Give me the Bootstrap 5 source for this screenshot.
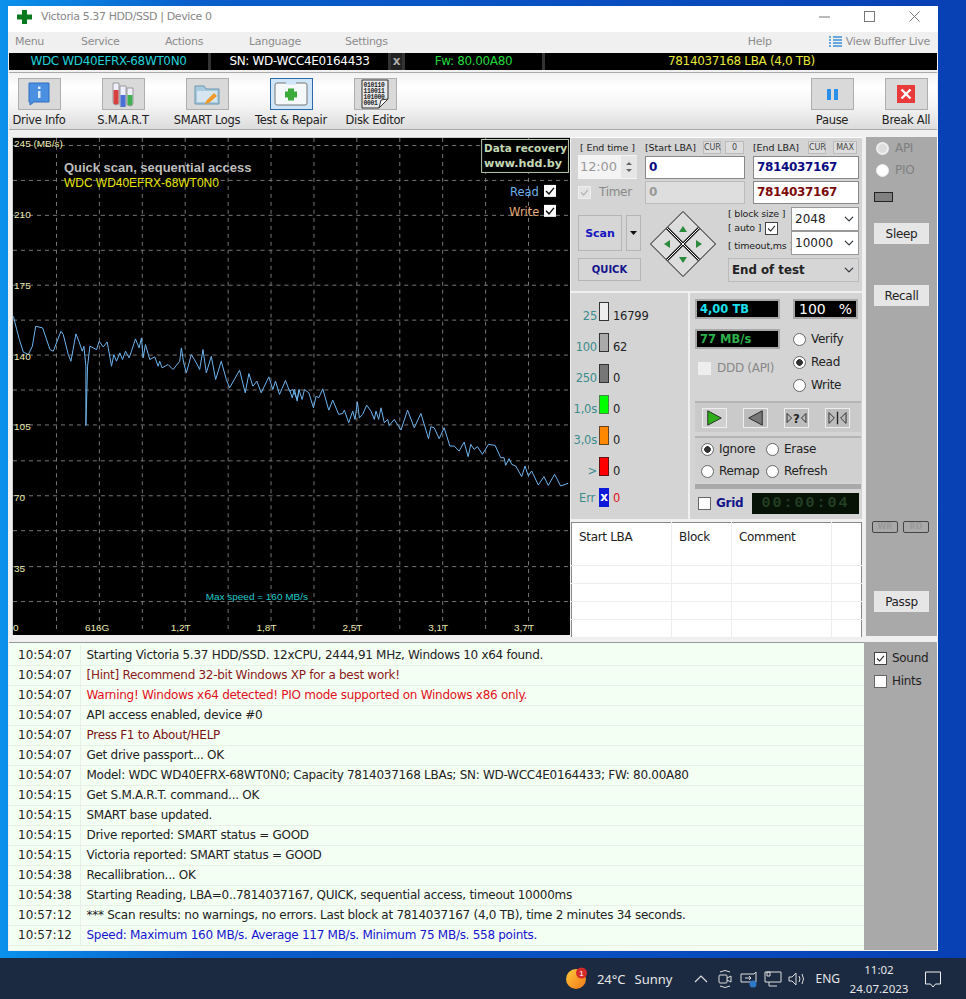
<!DOCTYPE html>
<html lang="en"><head><meta charset="utf-8"><title>Victoria</title>
<link href="https://cdn.jsdelivr.net/npm/bootstrap@5.3.0/dist/css/bootstrap.min.css" rel="stylesheet">
<style>
html,body{height:999px;overflow:hidden}
body{background:linear-gradient(90deg,#0a92ec 0,#0a5fca 20%,#0840b4 100%);font:11.5px/1.2 "DejaVu Sans",sans-serif;color:#222;position:relative}
.vw{margin:6px 0 0 8px;width:930px;height:945px;background:#f0f0f0}
.vtitle{height:26px;background:#fff;color:#888;font-size:11px;letter-spacing:-.4px;padding:0 0 5px 9px;gap:9px}
.vwin{margin-left:auto;gap:34px;padding-right:18px}
.vmenu{height:21px;color:#8c8c8c;padding:0 8px 2px 7px;font-size:11px;letter-spacing:-.3px}
.vmenu span.mi{width:84px}
.vhelp{margin-right:57px}
.vinfo{height:17px;background:#000;margin:0 1px;color:#fff;font-size:12px;letter-spacing:-.35px;text-align:center}
.vinfo>div{border-right:3px solid #333;height:100%;line-height:17px;white-space:nowrap}
.vtool{height:58px;margin:2px 1px 0;padding:5px 9px 0 0;background:linear-gradient(#f2f2f2,#fff 25%,#f4f4f4 60%,#dcdcdc);border-top:1px solid #aaa;border-bottom:1px solid #aaa;gap:24px}
.vti{width:60px;color:#222;font-size:11.5px;letter-spacing:-.3px;white-space:nowrap}
.vib{width:43px;height:32px;background:#d9d9d9;border:1px solid #aeaeae;margin-bottom:4px}
.vib.on{background:#cfe5f8;border-color:#2a6aa8}
.vmain{margin-top:7px;height:499px;padding-left:4px}
.vchart{width:558px;height:498px;background:#000;border-left:1px solid #ccc;border-top:1px solid #ccc;display:block;flex:none}
.vctl{width:291px;margin-left:1px;background:#f0f0f0;height:499px;flex:none}
.vtop{height:154px;flex:none;background:#d4d4d4;padding:3px 3px 0 7px;font-size:9.5px;letter-spacing:-.1px;border-top:1px solid #fff;white-space:nowrap}
.vlbls{display:grid;grid-template-columns:67px 108px 1fr;height:13px;align-items:center}
.vk{background:#ddd;border:1px solid #bbb;font-size:8px;line-height:11px;padding:0;color:#444;text-align:center;display:block}
.vf{height:23px;border:1px solid #888;background:#fff;font:bold 12px/21px "DejaVu Sans",sans-serif;padding:0 3px;border-radius:0;color:#0a0a80;letter-spacing:-.35px}
.vf.dis{background:#dedede;color:#999;border-color:#bbb}
.vf.red{color:#7d0a0a}
.vspin{width:59px;height:24px;background:#f4f4f4;color:#999;font-size:13px;padding-left:2px}
.vbtn{background:#d6d6d6;border:1px solid #b5b5b5;border-radius:0;padding:0;font:bold 11px "DejaVu Sans",sans-serif;color:#1414c0}
.vsel{height:24px;border:1px solid #999;border-radius:0;background-color:#fff;font:12px/22px "DejaVu Sans",sans-serif;padding:0 0 0 3px;background-position:right 3px center;background-size:12px 10px;color:#222}
.vlow{height:226px;margin-top:2px;flex:none}
.vstats{width:119px;background:#d4d4d4;padding-top:9px;gap:12px;border-right:2px solid #f0f0f0;flex:none}
.vrow{height:19px;font-size:11.5px;letter-spacing:-.2px}
.vrow b{font-weight:400;width:26px;text-align:right;color:#3c8c8c;margin-right:2px;white-space:nowrap;flex:none;padding-top:10px}
.vrow span{padding-top:10px}
.vrow b.verr{padding:3px 2px 0 0}
.vrow span.verr{padding-top:3px;color:#e01020}
.vrow i{display:block;width:10px;height:19px;border:1px solid #333;margin-right:4px;flex:none}
.vright{width:172px;background:#d4d4d4;padding:6px 1px 0 5px;flex:none}
.vblk{background:#000;border:2px solid #a8a8a8;font:bold 11.5px/16px "DejaVu Sans",sans-serif;padding-left:3px;height:20px}
.vcoll{width:98px;flex:none}
.form-check-input.vr,.form-check-input.vc{width:13px;height:13px;margin:0;flex:none;border:1px solid #666;background-color:#fff;opacity:1}
.form-check-input.vr:checked{background:#fff radial-gradient(circle,#333 3px,#fff 3.6px);border-color:#666}
.form-check-input.vc{border-radius:0}
.form-check-input.vc:checked{background-color:#fff;border-color:#444;background-image:url("data:image/svg+xml,%3csvg xmlns='http://www.w3.org/2000/svg' viewBox='0 0 13 13'%3e%3cpath fill='none' stroke='%23222' stroke-width='1.3' d='M2.5 6.5l3 3 5-6'/%3e%3c/svg%3e");background-size:100%}
.form-check-input.vc:disabled{border-color:#eee;background-color:#eee}
.form-check-input.vc:disabled:checked{background-color:#e4e4e4;border-color:#eee;background-image:url("data:image/svg+xml,%3csvg xmlns='http://www.w3.org/2000/svg' viewBox='0 0 13 13'%3e%3cpath fill='none' stroke='%23aaa' stroke-width='1.3' d='M2.5 6.5l3 3 5-6'/%3e%3c/svg%3e")}
.vopt{gap:5px;font-size:12px;letter-spacing:-.3px;height:13px;white-space:nowrap}
.vbar{height:31px;background:#cacaca;border-top:2px solid #b4b4b4;margin-top:9px;padding-left:7px;gap:16px;width:166px}
.vpb{width:25px;height:20px;background:#bdbdbd;border:1px solid #eee;display:block}
.vgrp{height:46px;background:#d0d0d0;border-top:2px solid #b4b4b4;margin-top:4px;width:166px;padding:5px 0 0 6px;gap:9px}
.vsep{height:5px;background:#a9a9a9;width:166px;margin-top:2px}
.vled{width:107px;height:21px;background:#061206;color:#243f24;font:bold 15px/21px "Liberation Mono",monospace;letter-spacing:2px;text-align:center}
.vtbl{width:291px;height:114px;margin-top:3px;background:#fff;border:1px solid #888;font-size:12px;letter-spacing:-.33px;table-layout:fixed;border-collapse:collapse;flex:none}
.vtbl td{border:1px solid #eee;padding:0;height:18px;vertical-align:top}
.vtbl tr:first-child td{height:43px;padding:7px 0 0 7px;border-top:0}
.vtbl td:first-child{border-left:0}.vtbl td:last-child{border-right:0}
.vside{width:72px;margin-left:4px;background:#a9a9a9;border-right:1px solid #fff;height:499px;padding:4px 8px 0;flex:none;color:#808080;font-size:12px}
.vsopt{margin-left:2px;gap:6px}
.vgb{display:block;width:55px;height:21px;background:#e6e6e6;border:0;border-radius:0;padding:0;color:#222;font:12px "DejaVu Sans",sans-serif;letter-spacing:-.3px}
.vtag{width:27px;height:12px;border:1px solid #444;border-radius:2px;font:bold 8px/10px "DejaVu Sans",sans-serif;color:#999;text-align:center}
.vlogw{height:308px;margin-top:6px;padding-left:1px}
.vlog{width:855px;height:308px;background:#f4fff4;border-top:1px solid #999;font-size:12px;letter-spacing:-.28px;border-collapse:collapse;align-self:flex-start;display:block;padding-top:2px}
.vlog td{height:20px;padding:0;border-bottom:1px solid #e6f0e6;white-space:nowrap}
.vlog td:first-child{width:71px;padding-left:9px;border-right:1px solid #e6f0e6;letter-spacing:0}
.vlog td:last-child{padding-left:6px;width:784px}
.vside2{width:74px;background:#a9a9a9;border-right:1px solid #fff;padding:10px 0 0 10px;gap:10px;color:#222;height:308px}
.vtask{position:absolute;left:0;right:0;top:958px;height:41px;background:#1b2a41;color:#e6e6e6;font:13px "Noto Sans",sans-serif;padding-right:25px}
.c1{color:#8b1a1a}.c2{color:#e01020}.c3{color:#7a1515}.c4{color:#1414d0}
</style></head><body>
<div class="vw d-flex flex-column">
 <div class="vtitle d-flex align-items-center">
  <svg width="15" height="14" viewBox="0 0 15 14"><path fill="#0a7a1e" d="M5 0h5v4.500h5v5h-5V14H5V9.500H0v-5h5z"/></svg>
  <span>Victoria 5.37 HDD/SSD | Device 0</span>
  <div class="vwin d-flex align-items-center">
   <svg width="11" height="11" viewBox="0 0 11 11"><path stroke="#777" d="M0 6h11"/></svg>
   <svg width="11" height="11" viewBox="0 0 11 11"><rect x=".5" y=".5" width="10" height="10" fill="none" stroke="#777"/></svg>
   <svg width="11" height="11" viewBox="0 0 11 11"><path stroke="#777" d="M.5.500l10 10M10.500.500l-10 10"/></svg>
  </div>
 </div>
 <div class="vmenu d-flex align-items-center">
  <span class="mi" style="width:66px">Menu</span><span class="mi">Service</span><span class="mi">Actions</span><span class="mi" style="width:96px">Language</span><span class="mi me-auto">Settings</span>
  <span class="vhelp">Help</span>
  <svg class="me-1" width="13" height="13" viewBox="0 0 13 13"><path stroke="#3a8fd8" stroke-width="1.4" d="M0 2h2M4 2h9M0 5h2M4 5h9M0 8h2M4 8h9M0 11h2M4 11h9"/></svg>
  <span>View Buffer Live</span>
 </div>
 <div class="vinfo d-flex">
  <div style="width:202px;color:#22d0d8">WDC WD40EFRX-68WT0N0</div>
  <div style="width:180px">SN: WD-WCC4E0164433</div>
  <div style="width:14px;font-weight:700;color:#aaa;background:#222">x</div>
  <div style="width:140px;color:#22d83a">Fw: 80.00A80</div>
  <div class="flex-grow-1" style="border:0;color:#e6e63a;padding-left:1px">7814037168 LBA (4,0 TB)</div>
 </div>
 <div class="vtool d-flex">
  <div class="vti d-flex flex-column align-items-center"><div class="vib d-flex align-items-center justify-content-center">
   <svg width="24" height="26" viewBox="0 0 24 26"><path fill="#4a8fe0" stroke="#2f6fc0" d="M2 2h20v19H7l-4 3v-3H2z"/><path fill="#dce9f8" d="M11 5.500h2.500v2.500H11zM11 10h2.500v7H11z"/></svg></div><span>Drive Info</span></div>
  <div class="vti d-flex flex-column align-items-center"><div class="vib d-flex align-items-center justify-content-center">
   <svg width="26" height="26" viewBox="0 0 26 26"><path fill="#eef" stroke="#999" d="M3 2h6v19a3 3 0 0 1-6 0zM10 5h6v19a3 3 0 0 1-6 0zM17 7h6v15a3 3 0 0 1-6 0z"/><path fill="#d84040" d="M3.500 9h5v12a2.500 2.500 0 0 1-5 0z"/><path fill="#4a70d8" d="M10.500 14h5v10a2.500 2.500 0 0 1-5 0z"/><path fill="#40b050" d="M17.500 14h5v8a2.500 2.500 0 0 1-5 0z"/></svg></div><span>S.M.A.R.T</span></div>
  <div class="vti d-flex flex-column align-items-center"><div class="vib d-flex align-items-center justify-content-center">
   <svg width="26" height="24" viewBox="0 0 26 24"><path fill="#a8cbe0" stroke="#6d95b0" d="M1 4h9l2 3h13v15H1z"/><path fill="#d5e6f0" d="M3 9h20v11H3z"/><path fill="#f09a2a" d="M12 19l8-8 3 3-8 7-4 1z"/></svg></div><span>SMART Logs</span></div>
  <div class="vti d-flex flex-column align-items-center"><div class="vib on d-flex align-items-center justify-content-center">
   <svg width="34" height="26" viewBox="0 0 34 26"><rect x="1" y="2" width="32" height="22" rx="2" fill="#f4f8f8" stroke="#777"/><path stroke="#cfe5f8" stroke-width="3" d="M12 2h10"/><path fill="#3aaa3a" d="M14 7.500h6v3h3v6h-3v3h-6v-3h-3v-6h3z"/></svg></div><span>Test &amp; Repair</span></div>
  <div class="vti d-flex flex-column align-items-center"><div class="vib d-flex align-items-center justify-content-center">
   <svg width="30" height="30" viewBox="0 0 30 30"><path fill="#e8e8e8" stroke="#333" d="M2 1h26v19l-9 9H2z"/><path fill="#fff" stroke="#333" d="M19 29l2-8 7-1z"/><text x="3.500" y="7.500" font-family="Liberation Mono" font-size="6.300" font-weight="700" fill="#222">010110</text><text x="3.500" y="13.500" font-family="Liberation Mono" font-size="6.300" font-weight="700" fill="#222">110011</text><text x="3.500" y="19.500" font-family="Liberation Mono" font-size="6.300" font-weight="700" fill="#222">101000</text><text x="3.500" y="25.500" font-family="Liberation Mono" font-size="6.300" font-weight="700" fill="#222">0001</text></svg></div><span>Disk Editor</span></div>
  <div class="vti d-flex flex-column align-items-center ms-auto"><div class="vib d-flex align-items-center justify-content-center">
   <svg width="11" height="11" viewBox="0 0 11 11"><path fill="#2a8fe8" d="M0 0h4v11H0zM7 0h4v11H7z"/></svg></div><span>Pause</span></div>
  <div class="vti d-flex flex-column align-items-center" style="margin-right:-8px;margin-left:-10px"><div class="vib d-flex align-items-center justify-content-center">
   <svg width="18" height="18" viewBox="0 0 18 18"><rect width="18" height="18" fill="#e83a3a"/><path stroke="#fff" stroke-width="2.400" d="M4.500 4.500l9 9M13.500 4.500l-9 9"/></svg></div><span>Break All</span></div>
 </div>
 <div class="vmain d-flex">
  <svg class="vchart" viewBox="13 138 558 498" width="558" height="498">
   <g stroke="#777" stroke-dasharray="4 4" fill="none">
    <path d="M56.500 138V634M99.500 138V634M142.500 138V634M185.500 138V634M228.500 138V634M271.500 138V634M314.500 138V634M357.500 138V634M400.500 138V634M443.500 138V634M486.500 138V634M529.500 138V634"/>
    <path d="M13 145.500H570M13 180.500H570M13 215.500H570M13 250.500H570M13 285.500H570M13 320.500H570M13 355.500H570M13 390.500H570M13 425.500H570M13 461.500H570M13 496.500H570M13 531.500H570M13 567.500H570M13 602.500H570"/>
   </g>
   <g fill="none" stroke="#6db4ee" stroke-width="1">
    <polyline vector-effect="non-scaling-stroke" transform="translate(0 300) scale(.3333)" points="40,50 50,90 58,120 70,158 85,165 97,140 107,80 128,85 150,150 160,155 183,95 190,105 205,165 213,185 228,103 237,125 247,155 252,140 258,200 258,378 263,200 270,140 290,150 298,125 310,142 322,127 335,200 342,165 350,185 360,160 368,180 377,155 388,175 395,155 407,118 418,145 425,115 430,175 437,135 450,180 465,172 475,200 480,185 487,205 505,195 520,210 540,185 545,145 552,190 560,220 575,165 590,190 600,210 610,150 620,220 635,170 648,240 665,185 680,240 690,265 720,212 737,280 748,222 760,260 772,245 785,280 808,232 820,270 828,245 840,285 858,243 870,275 880,270 893,300 900,270"/>
    <polyline vector-effect="non-scaling-stroke" transform="translate(290 340) scale(.3333)" points="0,150 8,175 15,150 23,185 28,150 38,180 45,150 58,160 72,205 80,170 88,175 100,148 118,212 130,182 148,225 160,222 165,212 178,250 190,215 197,240 204,187 210,235 220,225 232,197 245,215 255,240 260,215 268,240 275,205 285,250 295,240 300,258 315,240 335,272 355,212 375,265 395,222 418,298 425,262 435,265 450,298 465,265 482,320 495,320 510,335 525,308 537,352 545,315 555,330 565,322 580,345 598,315 618,318 635,355 645,355 650,378 660,358 668,375 680,380 698,412 708,380 718,410 728,395 748,437 765,412 778,438 797,405 815,440 838,432"/>
   </g>
   <g font-family="Liberation Sans" font-size="10" fill="#e8e8b0">
    <text x="14" y="147">245 (MB/s)</text><text x="14" y="218">210</text><text x="14" y="289">175</text><text x="14" y="360">140</text><text x="14" y="431">105</text><text x="14" y="502">70</text><text x="14" y="573">35</text>
    <text x="13" y="632">0</text><text x="85" y="632">616G</text><text x="171" y="632">1,2T</text><text x="257" y="632">1,8T</text><text x="343" y="632">2,5T</text><text x="429" y="632">3,1T</text><text x="515" y="632">3,7T</text>
   </g>
   <text x="206" y="601" font-family="Liberation Sans" font-size="10" fill="#20c8c8">Max speed = 160 MB/s</text>
   <text x="64" y="172" font-family="Liberation Sans" font-size="13" font-weight="700" fill="#bdbdbd">Quick scan, sequential access</text>
   <text x="64" y="187" font-family="Liberation Sans" font-size="12" fill="#e6e600">WDC WD40EFRX-68WT0N0</text>
   <rect x="482.500" y="139.500" width="87" height="33" fill="#000" stroke="#b8c8a8"/>
   <text x="485" y="152" font-family="DejaVu Sans" font-size="10.500" font-weight="700" fill="#c4d8b4">Data recovery</text>
   <text x="485" y="167" font-family="DejaVu Sans" font-size="11.200" font-weight="700" fill="#c4d8b4">www.hdd.by</text>
   <text x="511" y="196" font-family="DejaVu Sans" font-size="11.500" fill="#6fb0e8">Read</text>
   <text x="510" y="216" font-family="DejaVu Sans" font-size="11.500" fill="#e0a878">Write</text>
   <rect x="545" y="185" width="12" height="12" fill="#fff"/><path d="M547 191l3 3 5-6" fill="none" stroke="#111" stroke-width="1.400"/>
   <rect x="545" y="205" width="12" height="12" fill="#fff"/><path d="M547 211l3 3 5-6" fill="none" stroke="#111" stroke-width="1.400"/>
  </svg>
  <div class="vctl d-flex flex-column">
   <div class="vtop">
    <div class="vlbls"><span style="padding-left:2px">[ End time ]</span>
     <div class="d-flex align-items-center"><span style="width:58px">[Start LBA]</span><span class="vk" style="width:18px">CUR</span><span class="vk" style="width:19px;margin-left:4px">0</span></div>
     <div class="d-flex align-items-center"><span style="width:55px">[End LBA]</span><span class="vk" style="width:18px">CUR</span><span class="vk" style="width:24px;margin-left:7px">MAX</span></div></div>
    <div class="vlbls" style="height:24px;margin-top:1px">
     <div class="vspin d-flex align-items-center justify-content-between">12:00<svg width="16" height="22" viewBox="0 0 16 22"><rect width="16" height="22" fill="#e6e6e6"/><path fill="#666" d="M8 6l3 3H5zM8 16l3-3H5z"/></svg></div>
     <div class="vf" style="width:100px">0</div><div class="vf" style="width:106px">7814037167</div></div>
    <div class="vlbls" style="height:23px;margin-top:2px">
     <div class="d-flex align-items-center gap-2" style="color:#888;font-size:12px;letter-spacing:-.3px"><input class="form-check-input vc" type="checkbox" checked disabled aria-label="Timer"><span>Timer</span></div>
     <div class="vf dis" style="width:100px">0</div><div class="vf red" style="width:106px">7814037167</div></div>
    <div class="d-flex" style="margin-top:3px">
     <div style="width:63px;padding-top:8px">
      <div class="d-flex gap-1"><button class="btn vbtn" style="width:44px;height:36px">Scan</button><button class="btn vbtn d-flex align-items-center justify-content-center" style="width:15px;height:36px" aria-label="more"><svg width="7" height="4" viewBox="0 0 7 4"><path fill="#111" d="M0 0h7L3.500 4z"/></svg></button></div>
      <button class="btn vbtn d-block" style="width:63px;height:23px;margin-top:7px;color:#14148c;font-size:10px">QUICK</button>
     </div>
     <svg style="margin:4px 12px 0 9px;flex:none" width="66" height="66" viewBox="0 0 66 66">
      <path d="M33 .5L65.500 33 33 65.500.5 33z" fill="#ddd" stroke="#111"/>
      <path d="M17 17L49 49M49 17L17 49" stroke="#111" stroke-width="3"/><path d="M17 17L49 49M49 17L17 49" stroke="#fff" stroke-width="1"/>
      <path fill="#2c8a3c" d="M33 15l4 6h-8zM33 52l-4-6h8zM14 33l6-4v8zM52 33l-6-4v8z"/>
     </svg>
     <div class="flex-grow-1">
      <div class="d-flex" style="height:48px">
       <div style="width:63px;line-height:14px;white-space:nowrap;letter-spacing:-.2px"><div>[ block size ]</div><div class="d-flex align-items-center gap-1"><span>[ auto ]</span><input class="form-check-input vc" type="checkbox" checked aria-label="auto"></div><div class="mt-1">[ timeout,ms ]</div></div>
       <div class="d-flex flex-column" style="width:68px"><select class="form-select vsel" aria-label="block"><option>2048</option></select><select class="form-select vsel" aria-label="timeout"><option>10000</option></select></div>
      </div>
      <select class="form-select vsel d-block" style="margin-top:3px;background-color:#d6d6d6;font-weight:700;font-size:11.800px;border-color:#bbb" aria-label="end"><option>End of test</option></select>
     </div>
    </div>
   </div>
   <div class="vlow d-flex">
    <div class="vstats d-flex flex-column">
     <div class="vrow d-flex align-items-center"><b>25</b><i style="background:#eee"></i><span>16799</span></div>
     <div class="vrow d-flex align-items-center"><b>100</b><i style="background:#aaa"></i><span>62</span></div>
     <div class="vrow d-flex align-items-center"><b>250</b><i style="background:#777"></i><span>0</span></div>
     <div class="vrow d-flex align-items-center"><b>1,0s</b><i style="background:#0f0;border-color:#484"></i><span>0</span></div>
     <div class="vrow d-flex align-items-center"><b>3,0s</b><i style="background:#f80;border-color:#642"></i><span>0</span></div>
     <div class="vrow d-flex align-items-center"><b>&gt;</b><i style="background:#f00;border-color:#611"></i><span>0</span></div>
     <div class="vrow d-flex align-items-center"><b class="verr">Err</b><i class="d-flex align-items-center justify-content-center fst-normal fw-bold text-white" style="background:#0a1ad8;border:0;font-size:12px">x</i><span class="verr">0</span></div>
    </div>
    <div class="vright">
     <div class="d-flex">
      <div class="vcoll">
       <div class="vblk" style="width:85px;color:#1ee0f0">4,00 TB</div>
       <div class="vblk" style="width:85px;color:#2db04a;margin-top:10px">77 MB/s</div>
       <div class="d-flex align-items-center" style="gap:6px;margin-top:12px;padding-left:3px;color:#888;font-size:12px;letter-spacing:-.3px"><input class="form-check-input vc" type="checkbox" disabled aria-label="DDD"><span>DDD (API)</span></div>
      </div>
      <div>
       <div class="vblk d-flex justify-content-between" style="width:65px;color:#fff;font-weight:400;font-size:14px;padding:0 4px"><span>100</span><span>%</span></div>
       <div class="vopt d-flex align-items-center" style="margin-top:14px"><input class="form-check-input vr" type="radio" name="m" aria-label="Verify"><span>Verify</span></div>
       <div class="vopt d-flex align-items-center" style="margin-top:10px"><input class="form-check-input vr" type="radio" name="m" checked aria-label="Read"><span>Read</span></div>
       <div class="vopt d-flex align-items-center" style="margin-top:10px"><input class="form-check-input vr" type="radio" name="m" aria-label="Write"><span>Write</span></div>
      </div>
     </div>
     <div class="vbar d-flex align-items-center">
      <svg class="vpb" style="background:#d0d0d0" viewBox="0 0 25 20"><path d="M5 2l15 8-15 8z" fill="#2fb01a" stroke="#222"/></svg>
      <svg class="vpb" viewBox="0 0 25 20"><path d="M20 2L5 10l15 8z" fill="#777" stroke="#222"/></svg>
      <svg class="vpb" viewBox="0 0 25 20"><path d="M2 5l5 5-5 5zM23 5l-5 5 5 5z" fill="#bbb" stroke="#222"/><text x="12.500" y="15" text-anchor="middle" font-family="DejaVu Sans" font-size="13" font-weight="700" fill="#222">?</text></svg>
      <svg class="vpb" viewBox="0 0 25 20"><path d="M3 4l6 6-6 6zM22 4l-6 6 6 6z" fill="#bbb" stroke="#222"/><path d="M12.500 3v14" stroke="#222" stroke-width="1.500"/></svg>
     </div>
     <div class="vgrp d-flex flex-column">
      <div class="d-flex"><div class="vopt d-flex align-items-center" style="width:65px"><input class="form-check-input vr" type="radio" name="e" checked aria-label="Ignore"><span>Ignore</span></div><div class="vopt d-flex align-items-center"><input class="form-check-input vr" type="radio" name="e" aria-label="Erase"><span>Erase</span></div></div>
      <div class="d-flex"><div class="vopt d-flex align-items-center" style="width:65px"><input class="form-check-input vr" type="radio" name="e" aria-label="Remap"><span>Remap</span></div><div class="vopt d-flex align-items-center"><input class="form-check-input vr" type="radio" name="e" aria-label="Refresh"><span>Refresh</span></div></div>
     </div>
     <div class="vsep"></div>
     <div class="d-flex align-items-center" style="margin-top:4px;padding-left:3px">
      <input class="form-check-input vc" type="checkbox" aria-label="Grid"><span class="fw-bold" style="color:#14148c;font-size:12px;letter-spacing:-.3px;margin-left:5px;width:36px">Grid</span><div class="vled">00:00:04</div>
     </div>
    </div>
   </div>
   <table class="vtbl"><colgroup><col style="width:100px"><col style="width:60px"><col style="width:100px"><col></colgroup>
    <tr><td>Start LBA</td><td>Block</td><td>Comment</td><td></td></tr>
    <tr><td></td><td></td><td></td><td></td></tr><tr><td></td><td></td><td></td><td></td></tr><tr><td></td><td></td><td></td><td></td></tr><tr><td></td><td></td><td></td><td></td></tr>
   </table>
  </div>
  <div class="vside d-flex flex-column">
   <div class="vopt vsopt d-flex align-items-center" style="margin-top:1px"><input class="form-check-input vr" style="background:#ddd;border:2px solid #eee" type="radio" disabled aria-label="API"><span>API</span></div>
   <div class="vopt vsopt d-flex align-items-center" style="margin-top:9px"><input class="form-check-input vr" style="border-color:#eee" type="radio" disabled aria-label="PIO"><span>PIO</span></div>
   <div style="width:19px;height:10px;background:#808080;border:1px solid #222;margin-top:15px"></div>
   <button class="btn vgb" style="margin-top:21px">Sleep</button>
   <button class="btn vgb" style="margin-top:41px">Recall</button>
   <div class="d-flex" style="gap:5px;margin:215px 0 0 -2px"><div class="vtag">WR</div><div class="vtag">RD</div></div>
   <button class="btn vgb" style="margin-top:58px">Passp</button>
  </div>
 </div>
 <div class="vlogw d-flex">
  <table class="vlog">
   <tr><td>10:54:07</td><td>Starting Victoria 5.37 HDD/SSD. 12xCPU, 2444,91 MHz, Windows 10 x64 found.</td></tr>
   <tr><td>10:54:07</td><td class="c1">[Hint] Recommend 32-bit Windows XP for a best work!</td></tr>
   <tr><td>10:54:07</td><td class="c2">Warning! Windows x64 detected! PIO mode supported on Windows x86 only.</td></tr>
   <tr><td>10:54:07</td><td>API access enabled, device #0</td></tr>
   <tr><td>10:54:07</td><td class="c3">Press F1 to About/HELP</td></tr>
   <tr><td>10:54:07</td><td>Get drive passport... OK</td></tr>
   <tr><td>10:54:07</td><td>Model: WDC WD40EFRX-68WT0N0; Capacity 7814037168 LBAs; SN: WD-WCC4E0164433; FW: 80.00A80</td></tr>
   <tr><td>10:54:15</td><td>Get S.M.A.R.T. command... OK</td></tr>
   <tr><td>10:54:15</td><td>SMART base updated.</td></tr>
   <tr><td>10:54:15</td><td>Drive reported: SMART status = GOOD</td></tr>
   <tr><td>10:54:15</td><td>Victoria reported: SMART status = GOOD</td></tr>
   <tr><td>10:54:38</td><td>Recallibration... OK</td></tr>
   <tr><td>10:54:38</td><td>Starting Reading, LBA=0..7814037167, QUICK, sequential access, timeout 10000ms</td></tr>
   <tr><td>10:57:12</td><td>*** Scan results: no warnings, no errors. Last block at 7814037167 (4,0 TB), time 2 minutes 34 seconds.</td></tr>
   <tr><td>10:57:12</td><td class="c4">Speed: Maximum 160 MB/s. Average 117 MB/s. Minimum 75 MB/s. 558 points.</td></tr>
  </table>
  <div class="vside2 d-flex flex-column">
   <div class="vopt d-flex align-items-center"><input class="form-check-input vc" type="checkbox" checked aria-label="Sound"><span>Sound</span></div>
   <div class="vopt d-flex align-items-center"><input class="form-check-input vc" type="checkbox" aria-label="Hints"><span>Hints</span></div>
  </div>
 </div>
</div>
<div class="vtask d-flex align-items-center justify-content-end">
 <svg width="24" height="24" viewBox="0 0 24 24" style="margin-right:8px;margin-bottom:2px"><defs><linearGradient id="su" x1="0" y1="0" x2="1" y2="1"><stop offset="0" stop-color="#ffc83a"/><stop offset="1" stop-color="#f07818"/></linearGradient></defs><circle cx="11" cy="13" r="10" fill="url(#su)"/><circle cx="16.500" cy="7" r="5.500" fill="#d62a2a"/><text x="16.500" y="10" text-anchor="middle" font-size="8" fill="#fff" font-family="Liberation Sans">1</text></svg>
 <span style="margin-right:9px">24°C</span><span style="margin-right:22px">Sunny</span>
 <svg width="14" height="8" viewBox="0 0 14 8" style="margin-right:10px"><path d="M1 7l6-6 6 6" fill="none" stroke="#ddd" stroke-width="1.200"/></svg>
 <svg width="14" height="20" viewBox="0 0 14 20" style="margin-right:8px" fill="none" stroke="#ddd"><rect x="1" y="6" width="8" height="8" rx="1"/><path d="M9 9l4-2v6l-4-2M2 3q5-3 10 0M2 17q5 3 10 0"/></svg>
 <svg width="18" height="18" viewBox="0 0 18 18" style="margin-right:6px" fill="none" stroke="#ddd"><path d="M1 4h13l2-2v10H1zM5 8h6M9 6l2 2-2 2"/><circle cx="13" cy="14" r="3.500" fill="#2e78c8" stroke="none"/></svg>
 <svg width="18" height="16" viewBox="0 0 18 16" style="margin-right:6px" fill="none" stroke="#ddd"><path d="M1 1h16v10H1zM5 11v4h8M3 1h3v4H3z"/></svg>
 <svg width="18" height="14" viewBox="0 0 18 14" style="margin-right:9px" fill="none" stroke="#ddd"><path d="M1 5h3l4-4v12l-4-4H1zM11 4q2 3 0 6M14 2q3 5 0 10"/></svg>
 <span style="font-size:12px;margin-right:9px">ENG</span>
 <div class="text-center" style="font-size:11.500px;line-height:19px;width:60px;margin-right:16px;white-space:nowrap"><div>11:02</div><div>24.07.2023</div></div>
 <svg width="16" height="18" viewBox="0 0 16 18" fill="none" stroke="#eee"><path d="M.5 2h15v12h-5l-2.500 3-2.500-3h-5z"/></svg>
</div>
</body></html>
